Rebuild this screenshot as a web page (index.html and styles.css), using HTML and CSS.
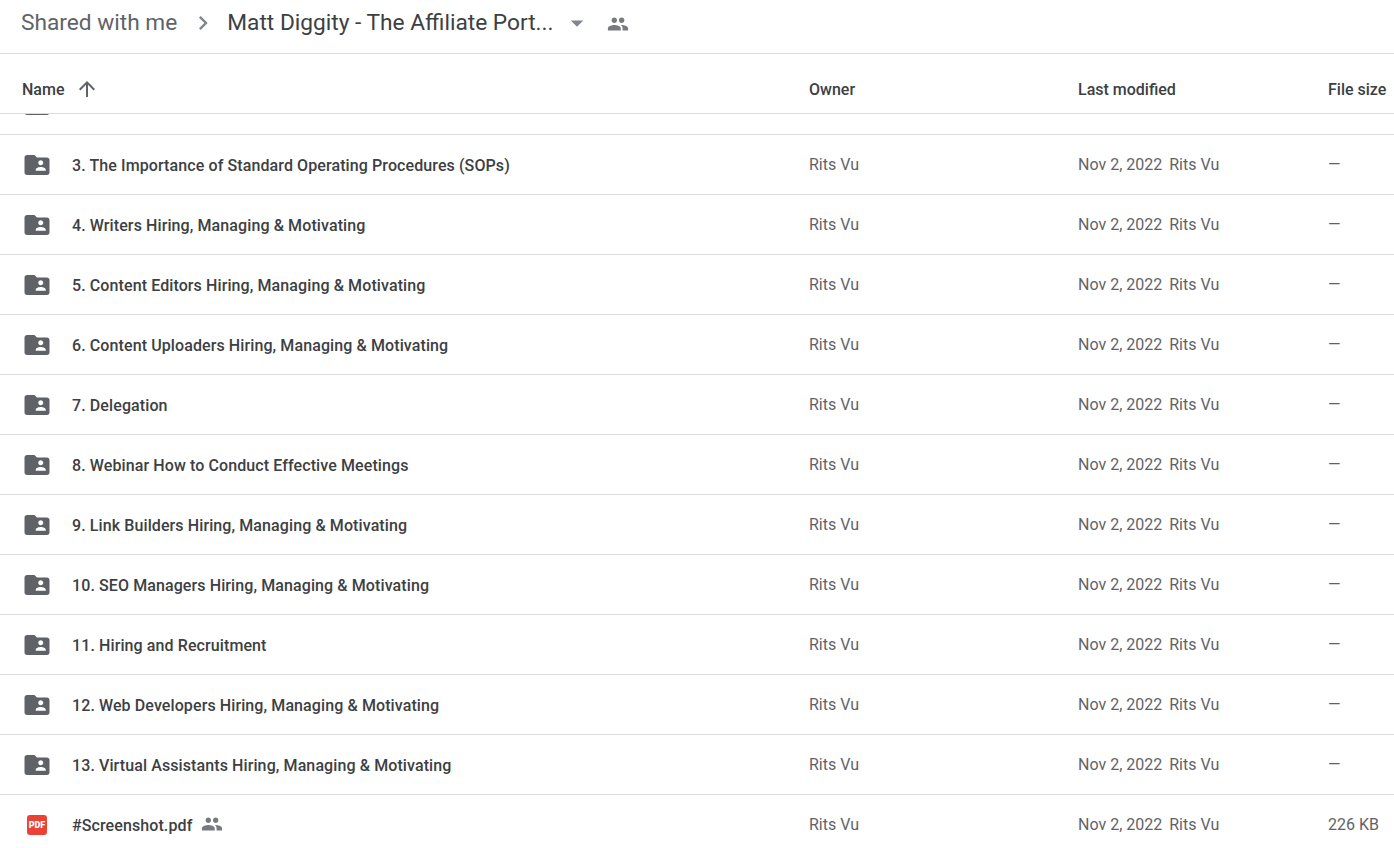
FILE: index.html
```html
<!DOCTYPE html>
<html>
<head>
    <title>Shared with me - Google Drive</title>
    <link rel="stylesheet" href="styles.css">
</head>
<body>
    <svg class="defs">
        <symbol id="folder" viewBox="0 0 24 24">
            <path d="M10 4H4c-1.1 0-2 .9-2 2v12c0 1.1.9 2 2 2h16c1.1 0 2-.9 2-2V8c0-1.1-.9-2-2-2h-8l-2-2z" fill="#5f6368"/>
            <path d="M15 8.2c1.1 0 2 .9 2 2s-.9 2-2 2-2-.9-2-2 .9-2 2-2zm4 8.3h-8v-1c0-1.33 2.67-2 4-2s4 .67 4 2v1z" fill="#fff"/>
        </symbol>
        <symbol id="people" viewBox="0 0 24 24">
            <path d="M16 11c1.66 0 2.99-1.34 2.99-3S17.66 5 16 5c-1.66 0-3 1.34-3 3s1.34 3 3 3zm-8 0c1.66 0 2.99-1.34 2.99-3S9.66 5 8 5C6.34 5 5 6.34 5 8s1.34 3 3 3zm0 2c-2.33 0-7 1.17-7 3.5V19h14v-2.5c0-2.33-4.67-3.5-7-3.5zm8 0c-.29 0-.62.02-.97.05 1.16.84 1.97 1.97 1.97 3.45V19h6v-2.5c0-2.33-4.67-3.5-7-3.5z"/>
        </symbol>
    </svg>

    <div class="topbar">
        <span class="crumb">Shared with me</span>
        <svg class="chevron" viewBox="0 0 24 24"><path d="M10 6L8.59 7.41 13.17 12l-4.58 4.59L10 18l6-6z"/></svg>
        <span class="crumb crumb-current">Matt Diggity - The Affiliate Port...</span>
        <svg class="caret" viewBox="0 0 24 24"><path d="M7 10l5 5 5-5z"/></svg>
        <svg class="people-top"><use href="#people"/></svg>
    </div>

    <div class="row head">
        <div class="head-name">Name
            <svg class="sort" viewBox="0 0 24 24"><path d="M4 12l1.41 1.41L11 7.83V20h2V7.83l5.58 5.59L20 12l-8-8-8 8z"/></svg>
        </div>
        <div>Owner</div>
        <div>Last modified</div>
        <div>File size</div>
    </div>

    <div class="sliver"><svg class="icon"><use href="#folder"/></svg></div>

    <div class="row file">
        <svg class="icon"><use href="#folder"/></svg>
        <div class="name">3. The Importance of Standard Operating Procedures (SOPs)</div>
        <div>Rits Vu</div>
        <div>Nov 2, 2022<span class="by">Rits Vu</span></div>
        <div>—</div>
    </div>
    <div class="row file">
        <svg class="icon"><use href="#folder"/></svg>
        <div class="name">4. Writers Hiring, Managing &amp; Motivating</div>
        <div>Rits Vu</div>
        <div>Nov 2, 2022<span class="by">Rits Vu</span></div>
        <div>—</div>
    </div>
    <div class="row file">
        <svg class="icon"><use href="#folder"/></svg>
        <div class="name">5. Content Editors Hiring, Managing &amp; Motivating</div>
        <div>Rits Vu</div>
        <div>Nov 2, 2022<span class="by">Rits Vu</span></div>
        <div>—</div>
    </div>
    <div class="row file">
        <svg class="icon"><use href="#folder"/></svg>
        <div class="name">6. Content Uploaders Hiring, Managing &amp; Motivating</div>
        <div>Rits Vu</div>
        <div>Nov 2, 2022<span class="by">Rits Vu</span></div>
        <div>—</div>
    </div>
    <div class="row file">
        <svg class="icon"><use href="#folder"/></svg>
        <div class="name">7. Delegation</div>
        <div>Rits Vu</div>
        <div>Nov 2, 2022<span class="by">Rits Vu</span></div>
        <div>—</div>
    </div>
    <div class="row file">
        <svg class="icon"><use href="#folder"/></svg>
        <div class="name">8. Webinar How to Conduct Effective Meetings</div>
        <div>Rits Vu</div>
        <div>Nov 2, 2022<span class="by">Rits Vu</span></div>
        <div>—</div>
    </div>
    <div class="row file">
        <svg class="icon"><use href="#folder"/></svg>
        <div class="name">9. Link Builders Hiring, Managing &amp; Motivating</div>
        <div>Rits Vu</div>
        <div>Nov 2, 2022<span class="by">Rits Vu</span></div>
        <div>—</div>
    </div>
    <div class="row file">
        <svg class="icon"><use href="#folder"/></svg>
        <div class="name">10. SEO Managers Hiring, Managing &amp; Motivating</div>
        <div>Rits Vu</div>
        <div>Nov 2, 2022<span class="by">Rits Vu</span></div>
        <div>—</div>
    </div>
    <div class="row file">
        <svg class="icon"><use href="#folder"/></svg>
        <div class="name">11. Hiring and Recruitment</div>
        <div>Rits Vu</div>
        <div>Nov 2, 2022<span class="by">Rits Vu</span></div>
        <div>—</div>
    </div>
    <div class="row file">
        <svg class="icon"><use href="#folder"/></svg>
        <div class="name">12. Web Developers Hiring, Managing &amp; Motivating</div>
        <div>Rits Vu</div>
        <div>Nov 2, 2022<span class="by">Rits Vu</span></div>
        <div>—</div>
    </div>
    <div class="row file">
        <svg class="icon"><use href="#folder"/></svg>
        <div class="name">13. Virtual Assistants Hiring, Managing &amp; Motivating</div>
        <div>Rits Vu</div>
        <div>Nov 2, 2022<span class="by">Rits Vu</span></div>
        <div>—</div>
    </div>
    <div class="row file last">
        <div class="pdf">PDF</div>
        <div class="name">#Screenshot.pdf<svg class="people-small"><use href="#people"/></svg></div>
        <div>Rits Vu</div>
        <div>Nov 2, 2022<span class="by">Rits Vu</span></div>
        <div>226 KB</div>
    </div>
</body>
</html>
```
FILE: styles.css
```css
html, body {
    margin: 0;
    height: 848px;
    overflow: hidden;
    background-color: #fff;
}
body {
    font-family: Roboto, "Liberation Sans", sans-serif;
    font-size: 16px;
    color: #5f6368;
}
.defs {
    display: none;
}

.topbar {
    display: flex;
    align-items: center;
    height: 45px;
    padding-left: 21px;
    padding-bottom: 8px;
    border-bottom: 1px solid #dadce0;
}
.crumb {
    font-size: 22.7px;
    color: #5f6368;
    white-space: nowrap;
}
.crumb-current {
    color: #3c4043;
}
.chevron {
    width: 28px;
    height: 28px;
    margin: 0 10px 0 12px;
    fill: #80868b;
}
.caret {
    width: 30px;
    height: 30px;
    margin-left: 8px;
    fill: #80868b;
}
.people-top {
    width: 22px;
    height: 22px;
    margin: 3px 0 0 15px;
    fill: #5f6368;
    opacity: 0.85;
}

.row {
    display: grid;
    grid-template-columns: 72px 737px 269px 250px 1fr;
    align-items: center;
    height: 60px;
    border-bottom: 1px solid #dadce0;
    box-sizing: border-box;
    white-space: nowrap;
}
.head {
    grid-template-columns: 809px 269px 250px 1fr;
    padding-top: 11px;
    font-weight: 500;
    color: #3c4043;
}
.head-name {
    display: flex;
    align-items: center;
    padding-left: 22px;
}
.sort {
    width: 24px;
    height: 24px;
    margin-left: 11px;
    fill: #5f6368;
}
.sliver {
    height: 21px;
    box-sizing: border-box;
    border-bottom: 1px solid #dadce0;
    overflow: hidden;
    padding-left: 22px;
}
.icon {
    width: 30px;
    height: 30px;
    margin-left: 22px;
}
.sliver .icon {
    display: block;
    margin: -24px 0 0 0;
}
.name {
    display: flex;
    align-items: center;
    padding-top: 1px;
    font-weight: 500;
    letter-spacing: 0.1px;
    color: #3c4043;
}
.by {
    margin-left: 7px;
}
.people-small {
    width: 22px;
    height: 22px;
    margin: -3px 0 0 9px;
    fill: #5f6368;
    opacity: 0.85;
}
.pdf {
    width: 20px;
    height: 20px;
    margin-left: 27px;
    border-radius: 3px;
    background-color: #ea4335;
    color: #fff;
    font-size: 9px;
    font-weight: 900;
    line-height: 20px;
    text-align: center;
}
.last {
    border-bottom-color: transparent;
}
```
